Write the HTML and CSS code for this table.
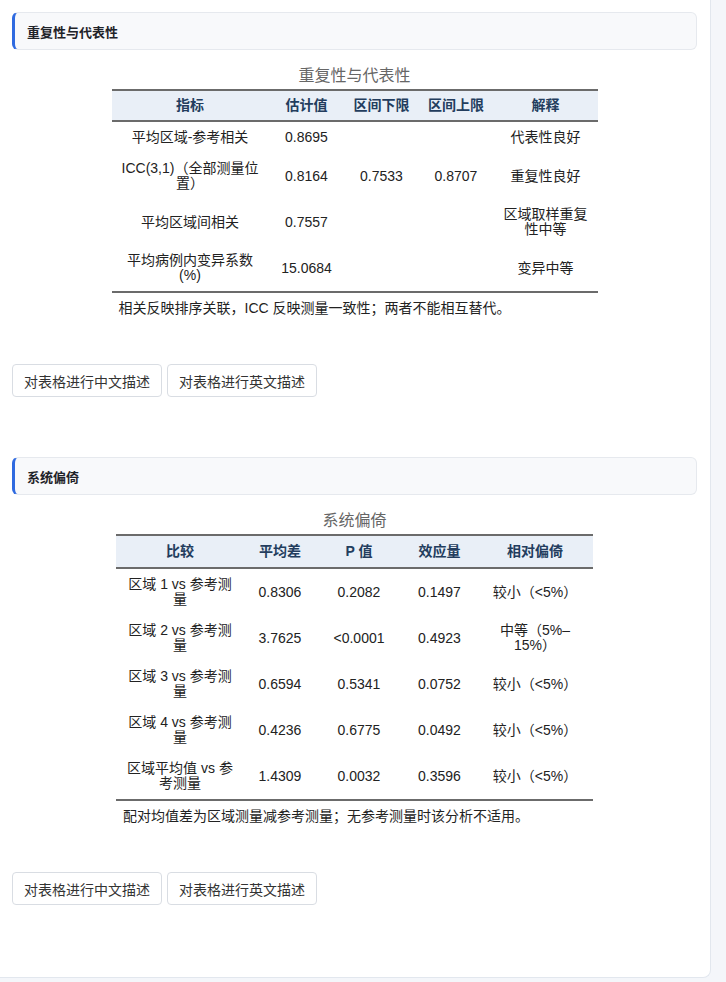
FILE: index.html
```html
<!DOCTYPE html>
<html lang="zh-CN">
<head>
<meta charset="utf-8">
<title>重复性与代表性</title>
<link rel="stylesheet" href="styles.css">
</head>
<body>
<div class="card">
  <section class="section">
    <h2 class="section-head">重复性与代表性</h2>
    <div class="fig">
      <table class="stat t1">
        <caption>重复性与代表性</caption>
        <colgroup><col class="c1"><col class="c2"><col class="c3"><col class="c4"><col class="c5"></colgroup>
        <thead>
          <tr><th>指标</th><th>估计值</th><th>区间下限</th><th>区间上限</th><th>解释</th></tr>
        </thead>
        <tbody>
          <tr><td>平均区域-参考相关</td><td>0.8695</td><td></td><td></td><td>代表性良好</td></tr>
          <tr><td>ICC(3,1)（全部测量位置）</td><td>0.8164</td><td>0.7533</td><td>0.8707</td><td>重复性良好</td></tr>
          <tr><td>平均区域间相关</td><td>0.7557</td><td></td><td></td><td>区域取样重复性中等</td></tr>
          <tr><td>平均病例内变异系数 (%)</td><td>15.0684</td><td></td><td></td><td>变异中等</td></tr>
        </tbody>
      </table>
      <p class="note">相关反映排序关联，ICC 反映测量一致性；两者不能相互替代。</p>
    </div>
    <div class="actions">
      <button class="btn">对表格进行中文描述</button>
      <button class="btn">对表格进行英文描述</button>
    </div>
  </section>

  <section class="section">
    <h2 class="section-head">系统偏倚</h2>
    <div class="fig">
      <table class="stat t2">
        <caption>系统偏倚</caption>
        <colgroup><col class="c1"><col class="c2"><col class="c3"><col class="c4"><col class="c5"></colgroup>
        <thead>
          <tr><th>比较</th><th>平均差</th><th>P 值</th><th>效应量</th><th>相对偏倚</th></tr>
        </thead>
        <tbody>
          <tr><td>区域 1 vs 参考测量</td><td>0.8306</td><td>0.2082</td><td>0.1497</td><td>较小（&lt;5%）</td></tr>
          <tr><td>区域 2 vs 参考测量</td><td>3.7625</td><td>&lt;0.0001</td><td>0.4923</td><td>中等（5%–15%）</td></tr>
          <tr><td>区域 3 vs 参考测量</td><td>0.6594</td><td>0.5341</td><td>0.0752</td><td>较小（&lt;5%）</td></tr>
          <tr><td>区域 4 vs 参考测量</td><td>0.4236</td><td>0.6775</td><td>0.0492</td><td>较小（&lt;5%）</td></tr>
          <tr><td>区域平均值 vs 参考测量</td><td>1.4309</td><td>0.0032</td><td>0.3596</td><td>较小（&lt;5%）</td></tr>
        </tbody>
      </table>
      <p class="note">配对均值差为区域测量减参考测量；无参考测量时该分析不适用。</p>
    </div>
    <div class="actions">
      <button class="btn">对表格进行中文描述</button>
      <button class="btn">对表格进行英文描述</button>
    </div>
  </section>
</div>
</body>
</html>
```

FILE: styles.css
```css
* { box-sizing: border-box; }

html, body {
  margin: 0;
  padding: 0;
  background: #f4f6fa;
}

body {
  font-family: "Liberation Sans", "Noto Sans CJK SC", sans-serif;
  font-size: 14px;
  color: #222;
  height: 982px;
  overflow: hidden;
}

.card {
  width: 711px;
  background: #fff;
  border-right: 1px solid #e2e7ee;
  border-bottom: 1px solid #e2e7ee;
  border-bottom-right-radius: 8px;
  padding: 12px 13px 12px 12px;
}

.section {
  margin-bottom: 60px;
}

.section-head {
  margin: 0;
  height: 38px;
  display: flex;
  align-items: center;
  padding: 0 12px;
  font-size: 13px;
  font-weight: 700;
  color: #1f2329;
  background: #f8f9fb;
  border: 1px solid #e6e9ee;
  border-left: 3px solid #2f6ae0;
  border-radius: 6px;
}

.fig {
  width: fit-content;
  margin: 16px auto 0;
}

.stat {
  border-collapse: collapse;
  table-layout: fixed;
  border-top: 2px solid #6b6b6b;
  border-bottom: 2px solid #6b6b6b;
  line-height: 15px;
}

.stat caption {
  font-size: 16px;
  line-height: 20px;
  color: #666;
  padding-bottom: 3px;
}

.stat th {
  background: #e9eff7;
  color: #233d5e;
  font-weight: 700;
  padding: 7px 6px;
  border-bottom: 2px solid #6b6b6b;
  text-align: center;
}

.t2 th {
  padding: 8px 6px;
}

.stat td {
  padding: 8px 6px;
  text-align: center;
  vertical-align: middle;
}

.t1 { width: 486px; }
.t1 .c1 { width: 157px; }
.t1 .c2 { width: 76px; }
.t1 .c3 { width: 74px; }
.t1 .c4 { width: 75px; }
.t1 .c5 { width: 104px; }

.t2 { width: 477px; }
.t2 .c1 { width: 128px; }
.t2 .c2 { width: 72px; }
.t2 .c3 { width: 86px; }
.t2 .c4 { width: 75px; }
.t2 .c5 { width: 116px; }

.note {
  margin: 8px 0 0;
  padding: 0 7px;
  line-height: 15px;
  font-size: 14px;
  color: #222;
}

.actions {
  display: flex;
  gap: 5px;
  margin-top: 48px;
}

.btn {
  height: 33px;
  padding: 0 11px;
  font-family: inherit;
  font-size: 14px;
  color: #333;
  background: #fff;
  border: 1px solid #d9dde3;
  border-radius: 4px;
}
```
